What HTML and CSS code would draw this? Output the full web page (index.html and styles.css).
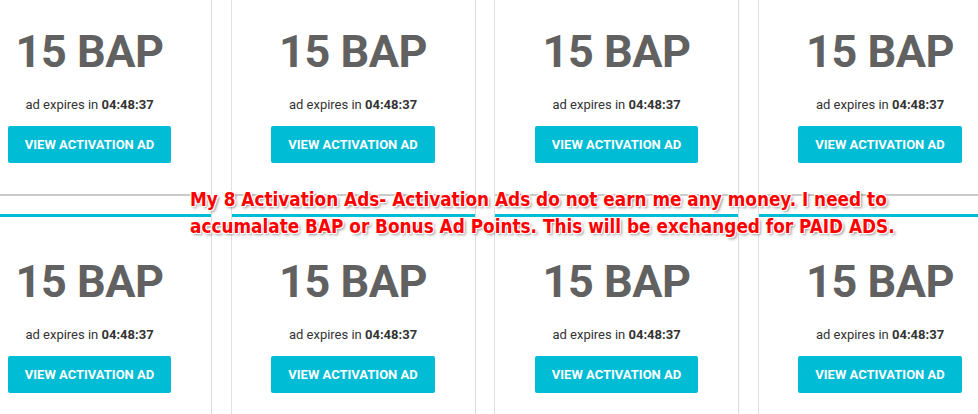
FILE: index.html
```html
<!DOCTYPE html>
<html lang="en">

<head>
    <meta charset="UTF-8">
    <meta name="viewport" content="width=device-width, initial-scale=1.0">
    <title>Activation Ads</title>
    <link rel="stylesheet" href="styles.css">
</head>

<body>
    <div class="page">
        <div class="ads">
            <div class="ad-col">
                <div class="ad-card">
                    <h2 class="ad-points">15 BAP</h2>
                    <p class="ad-expires">ad expires in <b>04:48:37</b></p>
                    <a class="ad-button" href="#">View Activation Ad</a>
                </div>
                <div class="ad-card">
                    <h2 class="ad-points">15 BAP</h2>
                    <p class="ad-expires">ad expires in <b>04:48:37</b></p>
                    <a class="ad-button" href="#">View Activation Ad</a>
                </div>
            </div>
            <div class="ad-col">
                <div class="ad-card">
                    <h2 class="ad-points">15 BAP</h2>
                    <p class="ad-expires">ad expires in <b>04:48:37</b></p>
                    <a class="ad-button" href="#">View Activation Ad</a>
                </div>
                <div class="ad-card">
                    <h2 class="ad-points">15 BAP</h2>
                    <p class="ad-expires">ad expires in <b>04:48:37</b></p>
                    <a class="ad-button" href="#">View Activation Ad</a>
                </div>
            </div>
            <div class="ad-col">
                <div class="ad-card">
                    <h2 class="ad-points">15 BAP</h2>
                    <p class="ad-expires">ad expires in <b>04:48:37</b></p>
                    <a class="ad-button" href="#">View Activation Ad</a>
                </div>
                <div class="ad-card">
                    <h2 class="ad-points">15 BAP</h2>
                    <p class="ad-expires">ad expires in <b>04:48:37</b></p>
                    <a class="ad-button" href="#">View Activation Ad</a>
                </div>
            </div>
            <div class="ad-col">
                <div class="ad-card">
                    <h2 class="ad-points">15 BAP</h2>
                    <p class="ad-expires">ad expires in <b>04:48:37</b></p>
                    <a class="ad-button" href="#">View Activation Ad</a>
                </div>
                <div class="ad-card">
                    <h2 class="ad-points">15 BAP</h2>
                    <p class="ad-expires">ad expires in <b>04:48:37</b></p>
                    <a class="ad-button" href="#">View Activation Ad</a>
                </div>
            </div>
        </div>

        <div class="note">My 8 Activation Ads- Activation Ads do not earn me any money. I need to<br>accumalate BAP or Bonus Ad Points. This will be exchanged for PAID ADS.</div>
    </div>
</body>

</html>
```

FILE: styles.css
```css
body {
    margin: 0;
    background: #fff;
    font-family: Roboto, "Liberation Sans", sans-serif;
    overflow: hidden;
}

.page {
    position: relative;
    height: 414px;
    overflow: hidden;
}

.ads {
    display: grid;
    grid-template-columns: repeat(4, 245px);
    column-gap: 18.5px;
    margin: -16px 0 0 -33px;
}

.ad-col {
    display: flex;
    flex-direction: column;
    gap: 18px;
    border-left: 1px solid #e2e2e2;
    border-right: 1px solid #dcdcdc;
}

.ad-card {
    display: flex;
    flex-direction: column;
    align-items: center;
    padding: 37px 0 31px;
    border-top: 3px solid #00bcd4;
    border-bottom: 2px solid #cacaca;
}

.ad-points {
    margin: 0;
    font-size: 45px;
    line-height: 56px;
    font-weight: 700;
    letter-spacing: -0.5px;
    color: #616161;
}

.ad-expires {
    margin: 16px 0 0;
    font-size: 13px;
    line-height: 18px;
    color: #333;
}

.ad-button {
    display: block;
    margin-top: 12px;
    padding: 0 17px;
    height: 37px;
    line-height: 37px;
    background: #00bcd4;
    border-radius: 2px;
    color: #fff;
    font-size: 13px;
    font-weight: 700;
    text-transform: uppercase;
    text-decoration: none;
}

.note {
    position: absolute;
    left: 190px;
    top: 186px;
    font-family: "DejaVu Sans Condensed", "DejaVu Sans", sans-serif;
    font-stretch: condensed;
    font-size: 18.8px;
    line-height: 27px;
    font-weight: 700;
    color: #f00;
    text-shadow: -1px -1px 0 #fff, 1px -1px 0 #fff, -1px 1px 0 #fff, 1px 1px 0 #fff, 2px 2px 3px rgba(0, 0, 0, 0.45);
}
```
